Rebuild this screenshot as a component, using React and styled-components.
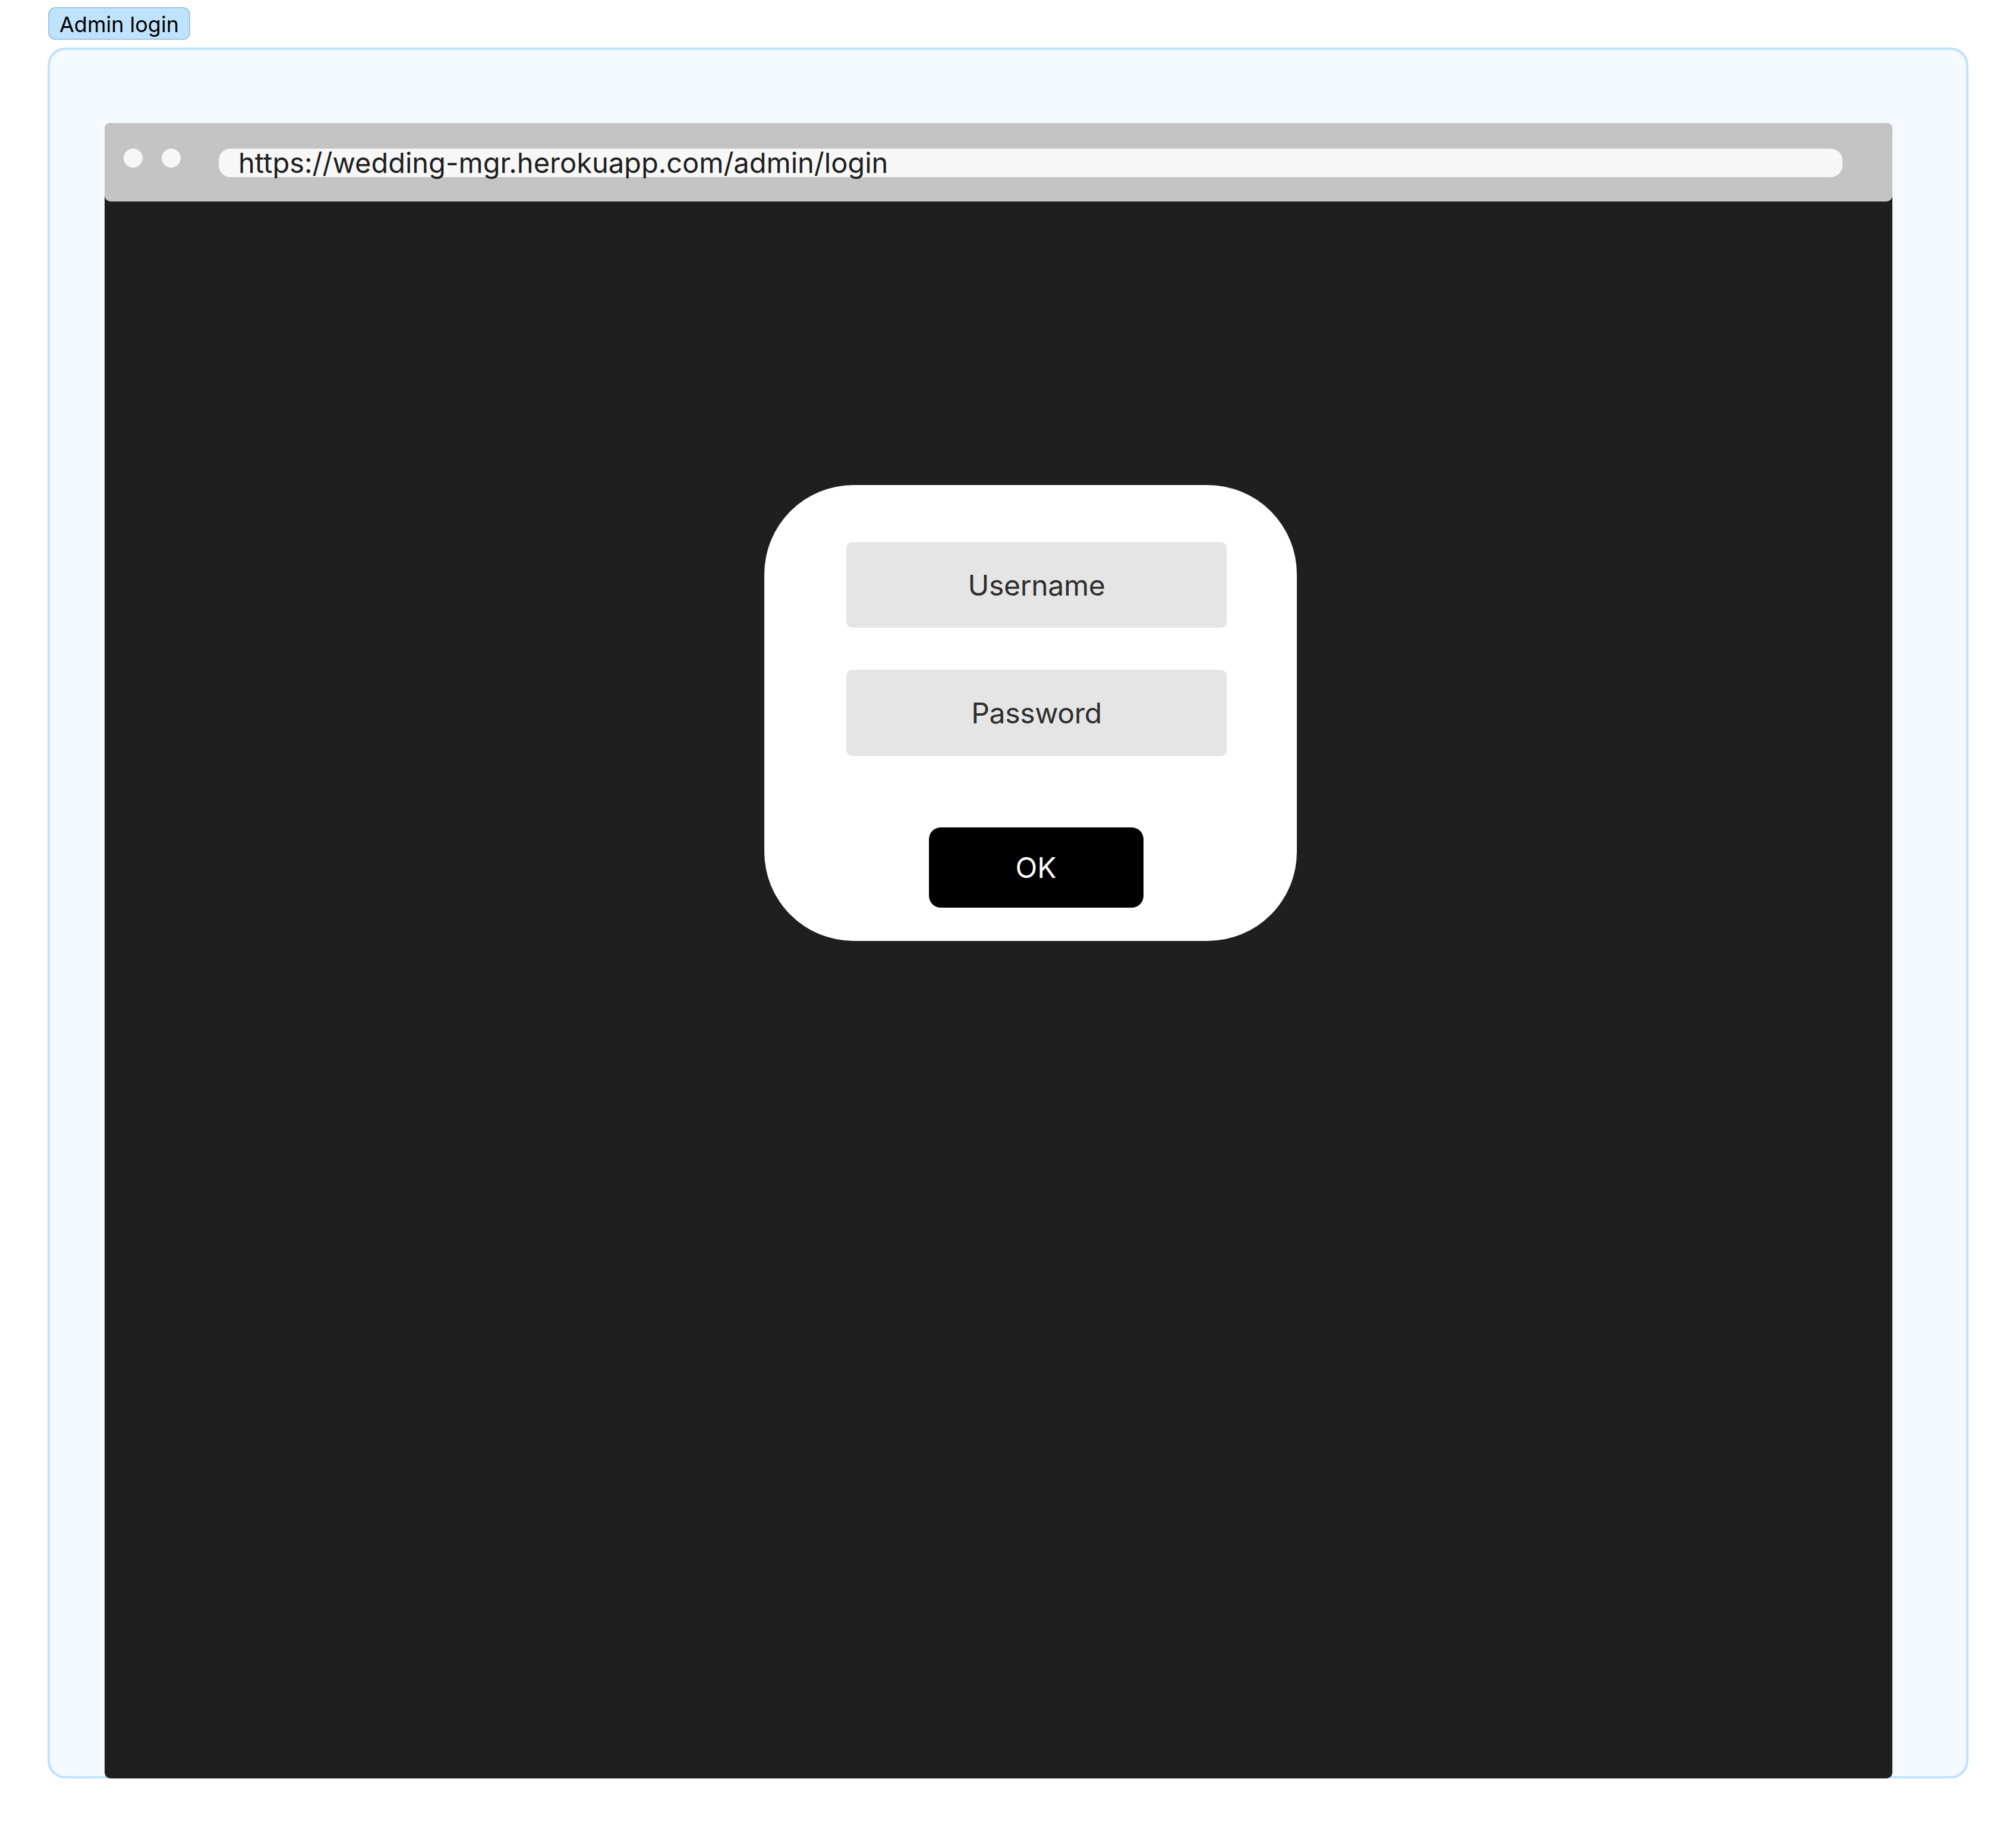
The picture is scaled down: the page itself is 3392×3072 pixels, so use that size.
import React from 'react';
import styled, { createGlobalStyle } from 'styled-components';

const GlobalStyle = createGlobalStyle`
    html, body {
        margin: 0;
        padding: 0;
        background: #ffffff;
    }
    body {
        font-family: Inter, 'Noto Sans', sans-serif;
    }
    * {
        box-sizing: border-box;
    }
`

const Page = styled.div`
    padding: 12px 0 0 80px;
`

const Badge = styled.div`
    display: inline-flex;
    align-items: center;
    height: 55px;
    margin-left: 1px;
    padding: 3px 17px 0 17px;
    background: #bfe3fc;
    border: 2px solid #a2c6df;
    border-radius: 12px;
    font-size: 36px;
    color: #000;
`

const Frame = styled.div`
    width: 3232px;
    height: 2912px;
    margin-top: 13px;
    padding: 123px 124px 0 92px;
    background: #f4faff;
    border: 4px solid #bee3fb;
    border-radius: 30px;
`

const Browser = styled.div`
    display: flex;
    flex-direction: column;
    width: 3008px;
    height: 2785px;
    background: #1f1f1f;
    border-radius: 10px;
`

const TitleBar = styled.div`
    display: flex;
    align-items: flex-start;
    height: 132px;
    padding: 43px 0 0 32px;
    background: #c4c4c4;
    border-radius: 10px;
`

const Dot = styled.span`
    width: 32px;
    height: 32px;
    margin-right: ${p => p.$gap}px;
    border-radius: 50%;
    background: #f7f7f7;
`

const UrlBar = styled.div`
    width: 2732px;
    height: 48px;
    padding-left: 33px;
    background: #f7f7f7;
    border-radius: 20px;
    font-size: 47px;
    line-height: 47px;
    color: #1e1e1e;
    white-space: nowrap;
`

const Viewport = styled.div`
    flex: 1;
    padding: 477px 0 0 1110px;
`

const Dialog = styled.div`
    display: flex;
    flex-direction: column;
    width: 896px;
    height: 767px;
    padding: 96px 118px 0 138px;
    background: #ffffff;
    border-radius: 150px;
`

const Field = styled.div`
    display: flex;
    align-items: center;
    justify-content: center;
    height: ${p => p.$h}px;
    margin-bottom: ${p => p.$mb}px;
    background: #e5e5e5;
    border-radius: 10px;
    font-size: 48px;
    letter-spacing: -0.3px;
    color: #2e2e2e;
`

const OkButton = styled.button`
    align-self: center;
    width: 361px;
    height: 135px;
    margin-right: 2px;
    border: none;
    border-radius: 20px;
    background: #000;
    color: #fff;
    font-family: Inter, 'Noto Sans', sans-serif;
    font-size: 48px;
    font-weight: 400;
`

function App() {
    return (
        <Page>
            <GlobalStyle />
            <Badge>Admin login</Badge>
            <Frame>
                <Browser>
                    <TitleBar>
                        <Dot $gap={32} />
                        <Dot $gap={64} />
                        <UrlBar>https://wedding-mgr.herokuapp.com/admin/login</UrlBar>
                    </TitleBar>
                    <Viewport>
                        <Dialog>
                            <Field $h={144} $mb={71}>Username</Field>
                            <Field $h={145} $mb={120}>Password</Field>
                            <OkButton>OK</OkButton>
                        </Dialog>
                    </Viewport>
                </Browser>
            </Frame>
        </Page>
    );
}

export default App
